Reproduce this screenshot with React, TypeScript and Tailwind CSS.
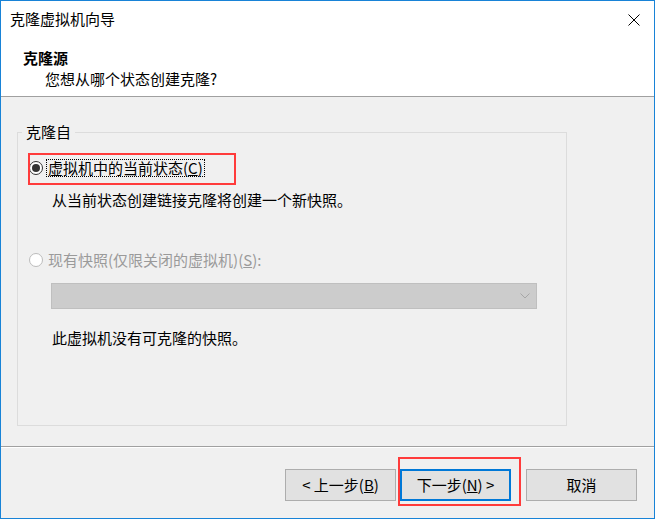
import React from 'react';

const font = "font-['Noto_Sans_CJK_SC',sans-serif]";

const Radio: React.FC<{ checked?: boolean; disabled?: boolean }> = ({ checked, disabled }) => (
  <span
    className={`w-[14px] h-[14px] rounded-full border flex items-center justify-center bg-white shrink-0 ${
      disabled ? 'border-[#bcbcbc]' : 'border-[#333333]'
    }`}
  >
    {checked && <span className="w-[8px] h-[8px] rounded-full bg-[#333333]" />}
  </span>
);

const Button: React.FC<{ children: React.ReactNode; primary?: boolean }> = ({ children, primary }) => (
  <button
    className={`relative w-[111px] h-[32px] bg-[#e1e1e1] text-[15px] leading-[20px] text-black flex items-center justify-center ${
      primary ? 'border-2 border-[#0078d7]' : 'border border-[#adadad]'
    }`}
  >
    {children}
  </button>
);

export default function App() {
  return (
    <div className={`${font} w-[655px] h-[519px] border border-[#1883d7] bg-[#f0f0f0] flex flex-col text-black`}>
      {/* title + header */}
      <div className="h-[96px] bg-white border-b border-[#a0a0a0] flex flex-col">
        <div className="h-[36px] flex items-center justify-between pl-[9px] pr-[14px]">
          <span className="text-[15px] leading-[20px]">克隆虚拟机向导</span>
          <svg width="12" height="12" viewBox="0 0 12 12" className="mt-[1px]">
            <path d="M0.5 0.5 L11.5 11.5 M11.5 0.5 L0.5 11.5" stroke="#000" strokeWidth="1" fill="none" />
          </svg>
        </div>
        <div className="pl-[22px] mt-[11px]">
          <div className="text-[15px] leading-[20px] font-bold">克隆源</div>
          <div className="text-[15px] leading-[20px] ml-[22px] mt-[1px]">您想从哪个状态创建克隆?</div>
        </div>
      </div>

      {/* body */}
      <div className="h-[350px] border-b border-[#a0a0a0] pt-[35px] pl-[16px]">
        <div className="relative w-[550px] h-[294px] border border-[#dcdcdc] pt-[26px] pl-[11px]">
          <span className="absolute left-[4px] top-[-11px] px-[4px] bg-[#f0f0f0] text-[15px] leading-[20px]">克隆自</span>

          <div className="relative flex items-center h-[18px]">
            <Radio checked />
            <span className="ml-[3px] border border-dotted border-black px-[1px] text-[15px] leading-[16px]">
              虚拟机中的当前状态(<span className="underline">C</span>)
            </span>
            <div className="absolute left-[-1px] top-[-6px] w-[208px] h-[32px] border-2 border-[#ff3b3b]" />
          </div>

          <div className="ml-[23px] mt-[13px] text-[15px] leading-[20px]">从当前状态创建链接克隆将创建一个新快照。</div>

          <div className="flex items-center h-[18px] mt-[41px]">
            <Radio disabled />
            <span className="ml-[3px] border border-transparent px-[1px] text-[15px] leading-[16px] text-[#9a9a9a]">
              现有快照(仅限关闭的虚拟机)(<span className="underline">S</span>):
            </span>
          </div>

          <div className="ml-[22px] mt-[14px] w-[486px] h-[26px] bg-[#cccccc] border border-[#bfbfbf] flex items-center justify-end pr-[6px]">
            <svg width="10" height="6" viewBox="0 0 10 6">
              <path d="M0.5 0.5 L5 5 L9.5 0.5" stroke="#a6a6a6" strokeWidth="1" fill="none" />
            </svg>
          </div>

          <div className="ml-[23px] mt-[19px] text-[15px] leading-[20px]">此虚拟机没有可克隆的快照。</div>
        </div>
      </div>

      {/* footer */}
      <div className="flex-1 border-t border-white flex justify-end items-start pt-[21px] pr-[17px]">
        <Button>
          &lt; 上一步(<span className="underline">B</span>)
        </Button>
        <div className="ml-[4px]">
          <Button primary>
            下一步(<span className="underline">N</span>) &gt;
            <span className="absolute left-[-4px] top-[-14px] right-[-12px] bottom-[-7px] border-2 border-[#ff3b3b]" />
          </Button>
        </div>
        <div className="ml-[15px]">
          <Button>取消</Button>
        </div>
      </div>
    </div>
  );
}
